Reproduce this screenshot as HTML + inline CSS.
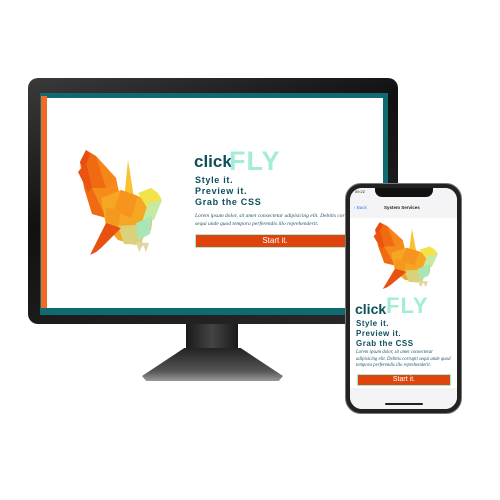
<!DOCTYPE html>
<html><head><meta charset="utf-8"><style>
body{margin:0;width:500px;height:500px;background:#fff;position:relative;overflow:hidden;font-family:"Liberation Sans",sans-serif}
.a{position:absolute}
.t{color:#0e4f5c;font-weight:bold;font-family:"Liberation Sans",sans-serif}
.fly{color:#a3ecd6;font-weight:bold;font-family:"Liberation Sans",sans-serif;letter-spacing:1px}
.lor{color:#1c5566;font-style:italic;font-family:"Liberation Serif",serif}
.btn{background:#e0440e;border:1.5px solid #a3ecd6;color:#fff;text-align:center;box-sizing:border-box}
</style></head><body>
<svg width="0" height="0" style="position:absolute"><defs>
<g id="bird">
<polygon points="4,14 10,2 20,8 40,30 45,55 30,70 16,66 8,40" fill="#f06a12"/>
<polygon points="4,14 10,2 14,6 8,22" fill="#e84c10"/>
<polygon points="2,24 10,14 16,40 12,44" fill="#ea5410"/>
<polygon points="20,8 40,30 30,40" fill="#f7861a"/>
<polygon points="16,40 30,40 40,30 45,55 30,70" fill="#f68b1b"/>
<polygon points="52,12 58,50 48,52" fill="#f9c22e"/>
<polygon points="25,50 45,42 62,48 78,55 75,82 60,97 42,92 30,78" fill="#f5a623"/>
<polygon points="45,42 62,48 55,70 38,62" fill="#f7941d"/>
<polygon points="30,60 45,62 42,80 30,78" fill="#f39a1e"/>
<polygon points="62,45 75,40 82,45 86,52 80,55 74,68 70,58" fill="#f3e34a"/>
<polygon points="72,55 86,52 78,72 66,74" fill="#c5eaa0"/>
<polygon points="42,78 72,76 65,97 48,96" fill="#d9d27a"/>
<polygon points="60,75 76,68 74,86 62,92" fill="#a8e6b8"/>
<polygon points="30,75 45,80 25,100 14,107 20,95" fill="#e8510f"/>
<polygon points="14,107 25,100 20,104" fill="#c9200a"/>
<polygon points="60,94 63,104 67,97 70,104 73,95" fill="#e2d7a0"/>
</g></defs></svg>

<!-- monitor -->
<div class="a" style="left:28px;top:78px;width:370px;height:246px;background:linear-gradient(160deg,#3a3a3a,#111 40%,#2a2a2a);border-radius:10px"></div>
<div class="a" style="left:40px;top:93px;width:348px;height:222px;background:#0f6a72"></div>
<div class="a" style="left:41px;top:96px;width:6px;height:212px;background:#f06a25"></div>
<div class="a" style="left:47px;top:98px;width:336px;height:210px;background:#fff"></div>
<svg class="a" style="left:76px;top:148px" width="86" height="107" viewBox="0 0 86 107"><use href="#bird"/></svg>
<div class="a t" style="left:194px;top:153px;font-size:17px;line-height:18px">click</div>
<div class="a fly" style="left:229px;top:146px;font-size:27px;line-height:30px">FLY</div>
<div class="a t" style="left:195px;top:175px;font-size:9px;line-height:11px;letter-spacing:.7px">Style it.<br>Preview it.<br>Grab the CSS</div>
<div class="a lor" style="left:195px;top:212px;font-size:5.5px;line-height:8px;width:165px">Lorem ipsum dolor, sit amet consectetur adipisicing elit. Debitis corrupti sequi unde quod tempora perferendis illo reprehenderit.</div>
<div class="a btn" style="left:195px;top:234px;width:160px;height:14px;font-size:8px;line-height:11px">Start it.</div>
<!-- stand -->
<div class="a" style="left:186px;top:324px;width:52px;height:26px;background:linear-gradient(90deg,#1a1a1a,#444,#1a1a1a)"></div>
<div class="a" style="left:142px;top:348px;width:141px;height:33px;background:linear-gradient(180deg,#222,#555 70%,#999);clip-path:polygon(30% 0,70% 0,100% 85%,97% 100%,3% 100%,0 85%);border-radius:4px"></div>

<!-- phone -->
<div class="a" style="left:345px;top:183px;width:117px;height:231px;background:#222;border-radius:16px;border:1px solid #777;box-sizing:border-box"></div>
<div class="a" style="left:350px;top:188px;width:107px;height:221px;background:#fff;border-radius:12px;overflow:hidden">
 <div class="a" style="left:0;top:0;width:107px;height:30px;background:#f4f4f6"></div>
 <div class="a" style="left:25px;top:0;width:58px;height:9px;background:#111;border-radius:0 0 7px 7px"></div>
 <div class="a" style="left:5px;top:1px;font-size:4px;color:#222">09:22</div>
 <div class="a" style="left:4px;top:17px;font-size:4.5px;color:#3a7bf0">‹ Back</div>
 <div class="a" style="left:34px;top:17px;font-size:4.5px;color:#222;font-weight:bold">System Services</div>
 <svg class="a" style="left:22px;top:33px" width="66" height="68" viewBox="0 0 86 107" preserveAspectRatio="none"><use href="#bird"/></svg>
 <div class="a t" style="left:5px;top:113px;font-size:14px;line-height:16px">click</div>
 <div class="a fly" style="left:36px;top:106px;font-size:22px;line-height:24px">FLY</div>
 <div class="a t" style="left:6px;top:131px;font-size:8px;line-height:10px;letter-spacing:.5px">Style it.<br>Preview it.<br>Grab the CSS</div>
 <div class="a lor" style="left:6px;top:162px;font-size:4.8px;line-height:6.5px;width:96px">Lorem ipsum dolor, sit amet consectetur adipisicing elit. Debitis corrupti sequi unde quod tempora perferendis illo reprehenderit.</div>
 <div class="a btn" style="left:7px;top:186px;width:94px;height:12px;font-size:7px;line-height:9px">Start it.</div>
 <div class="a" style="left:0;top:200px;width:107px;height:21px;background:#f4f4f6"></div>
 <div class="a" style="left:35px;top:215px;width:38px;height:2px;background:#222;border-radius:1px"></div>
</div>
</body></html>
